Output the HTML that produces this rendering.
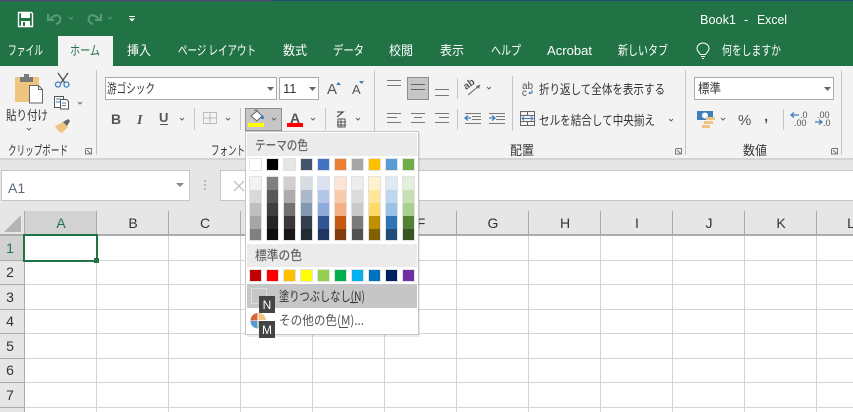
<!DOCTYPE html>
<html lang="ja"><head><meta charset="utf-8"><title>Excel</title>
<style>
html,body{margin:0;padding:0;width:853px;height:412px;overflow:hidden;background:#fff}
svg{display:block}
text{font-family:"Liberation Sans","Noto Sans CJK JP",sans-serif;font-size:12px;fill:#444}
text.j{font-family:"Noto Sans CJK JP","Liberation Sans",sans-serif;font-size:13px}
text.w{fill:#fff}
text.h{fill:#333;text-anchor:middle;font-size:14px}
.c{fill:none;stroke:#666;stroke-width:1}
</style></head><body>
<svg width="853" height="412" viewBox="0 0 853 412" xmlns="http://www.w3.org/2000/svg">
<!-- title / tabs -->
<rect width="853" height="66" fill="#217346"/>
<rect width="273" height="1" fill="#5b3a86"/><rect x="273" width="580" height="1" fill="#1f4e79"/>
<rect x="58" y="36" width="55" height="30" fill="#f3f3f3"/>
<!-- QAT -->
<path d="M18.500 12.500h13l1 1v13h-14z" fill="none" stroke="#fff" stroke-width="1.400"/>
<rect x="21" y="13" width="9" height="5" fill="#fff"/><rect x="21" y="21" width="9" height="5" fill="#fff"/><rect x="23" y="22" width="2" height="4" fill="#217346"/>
<path d="M50 19c3-3 6-5 9-3 3 3 1 7-3 8M48 14v6h6" fill="none" stroke="#5a9a78" stroke-width="2"/>
<path d="M99 19c-3-3-6-5-9-3-3 3-1 7 3 8M101 14v6h-6" fill="none" stroke="#5a9a78" stroke-width="2"/>
<path d="M69 17l2 2 2-2M108 17l2 2 2-2" fill="none" stroke="#5a9a78"/>
<rect x="129" y="16" width="6" height="1" fill="#fff"/><path d="M129 18.500h6l-3 3z" fill="#fff"/>
<text class="w" x="700" y="24" textLength="36" lengthAdjust="spacingAndGlyphs" style="font-size:13px">Book1</text>
<text class="w" x="744" y="24" style="font-size:13px">-</text>
<text class="w" x="757" y="24" textLength="30" lengthAdjust="spacingAndGlyphs" style="font-size:13px">Excel</text>
<text class="w j" x="8" y="55" textLength="35" lengthAdjust="spacingAndGlyphs">ファイル</text>
<text class="j" x="70" y="55" textLength="30" lengthAdjust="spacingAndGlyphs" style="fill:#217346">ホーム</text>
<text class="w j" x="127" y="55" textLength="24" lengthAdjust="spacingAndGlyphs">挿入</text>
<text class="w j" x="178" y="55" textLength="78" lengthAdjust="spacingAndGlyphs">ページ レイアウト</text>
<text class="w j" x="283" y="55" textLength="24" lengthAdjust="spacingAndGlyphs">数式</text>
<text class="w j" x="333" y="55" textLength="31" lengthAdjust="spacingAndGlyphs">データ</text>
<text class="w j" x="389" y="55" textLength="24" lengthAdjust="spacingAndGlyphs">校閲</text>
<text class="w j" x="440" y="55" textLength="24" lengthAdjust="spacingAndGlyphs">表示</text>
<text class="w j" x="491" y="55" textLength="30" lengthAdjust="spacingAndGlyphs">ヘルプ</text>
<text class="w" x="547" y="55" textLength="45" lengthAdjust="spacingAndGlyphs" style="font-size:13px">Acrobat</text>
<text class="w j" x="618" y="55" textLength="50" lengthAdjust="spacingAndGlyphs">新しいタブ</text>
<text class="w j" x="722" y="55" textLength="59" lengthAdjust="spacingAndGlyphs">何をしますか</text>
<path d="M700.500 54.500c-2-3-3.500-3.500-3.500-6a6 5.500 0 0 1 12 0c0 2.500-1.500 3-3.500 6zM701 56.500h4M702 58.500h2" fill="none" stroke="#fff"/>
<!-- ribbon -->
<rect y="66" width="853" height="93" fill="#f3f3f3"/>
<rect y="159" width="853" height="52" fill="#e6e6e6"/>
<rect y="158" width="853" height="2" fill="#d4d4d4"/>
<g fill="#c6c6c6">
<rect x="96" y="70" width="1" height="85"/><rect x="374" y="70" width="1" height="85"/><rect x="685" y="70" width="1" height="85"/><rect x="841" y="70" width="1" height="85"/>
<rect x="194" y="108" width="1" height="22"/><rect x="240" y="108" width="1" height="22"/><rect x="325" y="108" width="1" height="22"/>
<rect x="457" y="78" width="1" height="21"/><rect x="457" y="109" width="1" height="21"/><rect x="512" y="76" width="1" height="55"/><rect x="783" y="109" width="1" height="21"/>
</g>
<!-- clipboard -->
<rect x="15" y="77" width="24" height="25" rx="1" fill="#edc57f"/>
<rect x="20" y="77" width="13" height="5" fill="#7a7a7a"/><rect x="24" y="74" width="5" height="3" fill="#7a7a7a"/>
<path d="M29.500 85.500h9l4 4v13.500h-13z" fill="#fff" stroke="#666"/><path d="M38.500 85.500v4h4" fill="none" stroke="#666"/>
<text class="j" x="6" y="120" textLength="42" lengthAdjust="spacingAndGlyphs" style="fill:#333">貼り付け</text>
<path d="M27 128l2 2 2-2" class="c"/>
<path d="M58 73l7 10M68 73l-7 10" stroke="#555" fill="none" stroke-width="1.400"/><circle cx="58" cy="84.500" r="2.500" fill="none" stroke="#3f7fbe" stroke-width="1.300"/><circle cx="66.500" cy="84.500" r="2.500" fill="none" stroke="#3f7fbe" stroke-width="1.300"/>
<path d="M54.500 96.500h9v11h-9z" fill="#fff" stroke="#555"/><path d="M60.500 99.500h6l2 2v7.500h-8z" fill="#fff" stroke="#555"/><path d="M56 99h5M56 102h4M62 103h4M62 105.500h4" stroke="#3f7fbe"/>
<path d="M78 102l2 2 2-2" class="c"/>
<path d="M55 126l8-4 5 5-6 6c-3-1-5-3-7-7z" fill="#edc57f"/><path d="M63 122l5-3 2 2-3 5z" fill="#666"/>
<text class="j" x="8" y="155" textLength="60" lengthAdjust="spacingAndGlyphs" style="fill:#333">クリップボード</text>
<path d="M85.500 148.500h6v6M87 150l4 4M85.500 149v5h5" fill="none" stroke="#777"/>
<!-- font -->
<rect x="105.500" y="77.500" width="171" height="22" fill="#fff" stroke="#ababab"/>
<text class="j" x="107" y="93" textLength="48" lengthAdjust="spacingAndGlyphs" style="fill:#333">游ゴシック</text>
<path d="M267 87h7l-3.500 4z" fill="#666"/>
<rect x="279.500" y="77.500" width="39" height="22" fill="#fff" stroke="#ababab"/>
<text x="283" y="93" style="font-size:13px;fill:#333">11</text>
<path d="M309 87h7l-3.500 4z" fill="#666"/>
<text x="327" y="94" style="font-size:15px;fill:#555">A</text><path d="M336 85l2.500-3 2.500 3z" fill="#3f7fbe"/>
<text x="352" y="94" style="font-size:13px;fill:#555">A</text><path d="M359 81h5l-2.500 3z" fill="#3f7fbe"/>
<text x="111" y="124" style="font-size:14px;font-weight:bold;fill:#555">B</text>
<text x="137" y="124" style="font-size:14px;font-weight:bold;font-style:italic;font-family:'Liberation Serif',serif;fill:#555">I</text>
<text x="159" y="122" style="font-size:13px;font-weight:bold;fill:#555">U</text><rect x="160" y="124" width="8" height="1" fill="#555"/>
<path d="M180 118l2 2 2-2M226 118l2 2 2-2M311 118l2 2 2-2M356 118l2 2 2-2" class="c"/>
<path d="M203.500 112.500h13v11h-13zM210 112.500v11M203.500 118h13" fill="none" stroke="#888" stroke-dasharray="1 1"/>
<rect x="245.500" y="108.500" width="36" height="22" fill="#c6c6c6" stroke="#8e8e8e"/>
<path d="M272 118l2 2 2-2" class="c"/>
<path d="M251 116l6-5 5 5-5 5z" fill="#fff" stroke="#666"/><path d="M255 111v-1h2v2" fill="none" stroke="#666"/><path d="M261 115c2 0 3 1 3 4h-3z" fill="#3f7fbe"/>
<rect x="248" y="123" width="16" height="4" fill="#ffff00"/>
<text x="290" y="123" style="font-size:14px;font-weight:bold;fill:#555">A</text><rect x="287" y="123" width="16" height="4" fill="#ff0000"/>
<path d="M337 112h6l-6 5" fill="none" stroke="#555" stroke-width="1.300"/><path d="M338 119h7v8h-7zM337 122h9M337 125h9M341 119v8" fill="none" stroke="#555"/>
<text class="j" x="211" y="155" textLength="34" lengthAdjust="spacingAndGlyphs" style="fill:#333">フォント</text>
<!-- alignment -->
<path d="M387 80.500h14M387 85.500h14M435 89.500h14M435 95.500h14M387 113.500h14M387 117.500h10M387 122.500h14M411 113.500h14M414 117.500h8M411 122.500h14M435 113.500h14M439 117.500h10M435 122.500h14" stroke="#777" fill="none"/>
<rect x="407.500" y="77.500" width="21" height="22" fill="#c6c6c6" stroke="#8e8e8e"/>
<path d="M411 84.500h14M411 89.500h14" stroke="#666"/>
<path d="M468 95l12-10" stroke="#666" fill="none"/><path d="M480 85l-4 1 3 3z" fill="#666"/><text x="466" y="90" transform="rotate(-35 466 90)" style="font-size:10px;font-weight:bold;fill:#555">ab</text>
<path d="M487 87l2 2 2-2M669 119l2 2 2-2" class="c"/>
<path d="M465 113.500h16M472 116.500h9M472 119.500h9M465 123.500h16" stroke="#777" fill="none"/><path d="M471 118h-6M468 115.500l-3 2.500 3 2.500" stroke="#3f7fbe" stroke-width="1.300" fill="none"/>
<path d="M489 113.500h16M496 116.500h9M496 119.500h9M489 123.500h16" stroke="#777" fill="none"/><path d="M489 118h6M492 115.500l3 2.500-3 2.500" stroke="#3f7fbe" stroke-width="1.300" fill="none"/>
<text x="522" y="89" style="font-size:10px;fill:#555">ab</text><text x="522" y="96" style="font-size:10px;fill:#555">c</text><path d="M532 90v3h-3M530.500 92l-1.500 1 1.500 1" fill="none" stroke="#3f7fbe"/>
<text class="j" x="539" y="94" textLength="126" lengthAdjust="spacingAndGlyphs" style="fill:#333">折り返して全体を表示する</text>
<path d="M520.500 111.500h14v14h-14zM520.500 115.500h14M520.500 121.500h14M527.500 111.500v4M527.500 121.500v4" fill="#f3f3f3" stroke="#666"/>
<path d="M522 118.500h11M524 116.500l-2 2 2 2M531 116.500l2 2-2 2" fill="none" stroke="#3f7fbe"/>
<text class="j" x="539" y="125" textLength="116" lengthAdjust="spacingAndGlyphs" style="fill:#333">セルを結合して中央揃え</text>
<text class="j" x="510" y="155" textLength="24" lengthAdjust="spacingAndGlyphs" style="fill:#333">配置</text>
<path d="M675.500 148.500h6v6M677 150l4 4M675.500 149v5h5" fill="none" stroke="#777"/>
<!-- number -->
<rect x="694.500" y="77.500" width="139" height="22" fill="#fff" stroke="#ababab"/>
<text class="j" x="698" y="93" textLength="23" lengthAdjust="spacingAndGlyphs" style="fill:#333">標準</text>
<path d="M824 87h7l-3.500 4z" fill="#666"/>
<rect x="697" y="111" width="16" height="9" fill="#3f7fbe"/><ellipse cx="705" cy="115.500" rx="3" ry="3" fill="#fff"/>
<rect x="706" y="117" width="9" height="3" fill="#edc57f"/><rect x="704" y="121" width="9" height="3" fill="#edc57f"/><rect x="702" y="125" width="8" height="3" fill="#edc57f"/>
<path d="M721 118l2 2 2-2" class="c"/>
<text x="738" y="125" style="font-size:15px;fill:#555">%</text>
<text x="764" y="121" style="font-size:15px;font-weight:bold;fill:#555">,</text>
<text x="800" y="118" style="font-size:9px;fill:#555">.0</text><text x="794" y="126" style="font-size:9px;fill:#555">.00</text><path d="M799 115h-8M794 112.500l-3 2.500 3 2.500" fill="none" stroke="#3f7fbe" stroke-width="1.300"/>
<text x="817" y="118" style="font-size:9px;fill:#555">.00</text><text x="823" y="126" style="font-size:9px;fill:#555">.0</text><path d="M815 122h7M819 119.500l3 2.500-3 2.500" fill="none" stroke="#3f7fbe" stroke-width="1.300"/>
<text class="j" x="743" y="155" textLength="24" lengthAdjust="spacingAndGlyphs" style="fill:#333">数値</text>
<path d="M831.500 148.500h6v6M833 150l4 4M831.500 149v5h5" fill="none" stroke="#777"/>
<!-- formula bar -->
<rect x="1.500" y="170.500" width="188" height="30" fill="#fff" stroke="#c6c6c6"/>
<text x="8" y="193" style="font-size:14px;fill:#5a6a7a">A1</text>
<path d="M176 183h8l-4 4z" fill="#8a8a8a"/>
<path d="M205 180v2M205 184v2M205 188v2" stroke="#a6a6a6" stroke-width="1.500"/>
<rect x="220.500" y="170.500" width="640" height="30" fill="#fff" stroke="#c6c6c6"/>
<path d="M234 181l10 10M244 181l-10 10" stroke="#c6c6c6" stroke-width="1.500"/>
<!-- grid headers -->
<rect y="211" width="853" height="24" fill="#e6e6e6"/>
<rect y="235" width="24" height="177" fill="#e6e6e6"/>
<rect x="24" y="211" width="73" height="24" fill="#d2d2d2"/>
<rect y="235" width="24" height="25" fill="#d2d2d2"/>
<path d="M4 232l17-17v17z" fill="#b4b4b4"/>
<rect y="234" width="853" height="2" fill="#ababab"/>
<rect x="24" y="211" width="1" height="201" fill="#ababab"/>
<g fill="#d4d4d4">
<rect x="96" y="236" width="1" height="176"/><rect x="168" y="236" width="1" height="176"/><rect x="240" y="236" width="1" height="176"/><rect x="312" y="236" width="1" height="176"/><rect x="384" y="236" width="1" height="176"/><rect x="456" y="236" width="1" height="176"/><rect x="528" y="236" width="1" height="176"/><rect x="600" y="236" width="1" height="176"/><rect x="672" y="236" width="1" height="176"/><rect x="744" y="236" width="1" height="176"/><rect x="816" y="236" width="1" height="176"/>
<rect x="25" y="260" width="828" height="1"/><rect x="25" y="284" width="828" height="1"/><rect x="25" y="309" width="828" height="1"/><rect x="25" y="333" width="828" height="1"/><rect x="25" y="358" width="828" height="1"/><rect x="25" y="382" width="828" height="1"/><rect x="25" y="407" width="828" height="1"/>
</g>
<g fill="#ababab">
<rect x="96" y="211" width="1" height="24"/><rect x="168" y="211" width="1" height="24"/><rect x="240" y="211" width="1" height="24"/><rect x="312" y="211" width="1" height="24"/><rect x="384" y="211" width="1" height="24"/><rect x="456" y="211" width="1" height="24"/><rect x="528" y="211" width="1" height="24"/><rect x="600" y="211" width="1" height="24"/><rect x="672" y="211" width="1" height="24"/><rect x="744" y="211" width="1" height="24"/><rect x="816" y="211" width="1" height="24"/>
<rect y="260" width="24" height="1"/><rect y="284" width="24" height="1"/><rect y="309" width="24" height="1"/><rect y="333" width="24" height="1"/><rect y="358" width="24" height="1"/><rect y="382" width="24" height="1"/><rect y="407" width="24" height="1"/>
</g>
<text class="h" x="61" y="228" style="fill:#217346">A</text><text class="h" x="133" y="228">B</text><text class="h" x="205" y="228">C</text><text class="h" x="421" y="228">F</text><text class="h" x="493" y="228">G</text><text class="h" x="565" y="228">H</text><text class="h" x="637" y="228">I</text><text class="h" x="709" y="228">J</text><text class="h" x="781" y="228">K</text><text class="h" x="851" y="228">L</text>
<text class="h" x="10" y="253" style="fill:#217346">1</text><text class="h" x="10" y="277">2</text><text class="h" x="10" y="302">3</text><text class="h" x="10" y="326">4</text><text class="h" x="10" y="351">5</text><text class="h" x="10" y="375">6</text><text class="h" x="10" y="400">7</text>
<rect x="24" y="235" width="73" height="26" fill="none" stroke="#217346" stroke-width="2"/>
<rect x="94" y="258" width="5" height="5" fill="#217346"/>
<!-- dropdown -->
<rect x="247" y="133" width="173" height="204" fill="#000" opacity=".08"/>
<rect x="245.500" y="131.500" width="173" height="203" fill="#fff" stroke="#c6c6c6"/>
<rect x="247" y="133" width="170" height="23" fill="#ebebeb"/>
<text class="j" x="255" y="150" textLength="53" lengthAdjust="spacingAndGlyphs" style="font-weight:500;fill:#666">テーマの色</text>
<g stroke="#e2e2e2" stroke-width="1">
<rect x="249.500" y="158.500" width="12" height="12" fill="#fff"/><rect x="266.500" y="158.500" width="12" height="12" fill="#000"/><rect x="283.500" y="158.500" width="12" height="12" fill="#e7e6e6"/><rect x="300.500" y="158.500" width="12" height="12" fill="#44546a"/><rect x="317.500" y="158.500" width="12" height="12" fill="#4472c4"/><rect x="334.500" y="158.500" width="12" height="12" fill="#ed7d31"/><rect x="351.500" y="158.500" width="12" height="12" fill="#a5a5a5"/><rect x="368.500" y="158.500" width="12" height="12" fill="#ffc000"/><rect x="385.500" y="158.500" width="12" height="12" fill="#5b9bd5"/><rect x="402.500" y="158.500" width="12" height="12" fill="#70ad47"/>
</g>
<g>
<rect x="249" y="176" width="13" height="65" fill="#e2e2e2"/><rect x="266" y="176" width="13" height="65" fill="#e2e2e2"/><rect x="283" y="176" width="13" height="65" fill="#e2e2e2"/><rect x="300" y="176" width="13" height="65" fill="#e2e2e2"/><rect x="317" y="176" width="13" height="65" fill="#e2e2e2"/><rect x="334" y="176" width="13" height="65" fill="#e2e2e2"/><rect x="351" y="176" width="13" height="65" fill="#e2e2e2"/><rect x="368" y="176" width="13" height="65" fill="#e2e2e2"/><rect x="385" y="176" width="13" height="65" fill="#e2e2e2"/><rect x="402" y="176" width="13" height="65" fill="#e2e2e2"/>
<rect x="250" y="177" width="11" height="13" fill="#f2f2f2"/><rect x="250" y="190" width="11" height="13" fill="#d9d9d9"/><rect x="250" y="203" width="11" height="13" fill="#bfbfbf"/><rect x="250" y="216" width="11" height="13" fill="#a6a6a6"/><rect x="250" y="229" width="11" height="11" fill="#808080"/>
<rect x="267" y="177" width="11" height="13" fill="#808080"/><rect x="267" y="190" width="11" height="13" fill="#595959"/><rect x="267" y="203" width="11" height="13" fill="#404040"/><rect x="267" y="216" width="11" height="13" fill="#262626"/><rect x="267" y="229" width="11" height="11" fill="#0d0d0d"/>
<rect x="284" y="177" width="11" height="13" fill="#d0cece"/><rect x="284" y="190" width="11" height="13" fill="#afabab"/><rect x="284" y="203" width="11" height="13" fill="#767171"/><rect x="284" y="216" width="11" height="13" fill="#3b3838"/><rect x="284" y="229" width="11" height="11" fill="#181717"/>
<rect x="301" y="177" width="11" height="13" fill="#d6dce4"/><rect x="301" y="190" width="11" height="13" fill="#adb9ca"/><rect x="301" y="203" width="11" height="13" fill="#8497b0"/><rect x="301" y="216" width="11" height="13" fill="#333f4f"/><rect x="301" y="229" width="11" height="11" fill="#222b35"/>
<rect x="318" y="177" width="11" height="13" fill="#d9e1f2"/><rect x="318" y="190" width="11" height="13" fill="#b4c6e7"/><rect x="318" y="203" width="11" height="13" fill="#8ea9db"/><rect x="318" y="216" width="11" height="13" fill="#305496"/><rect x="318" y="229" width="11" height="11" fill="#203764"/>
<rect x="335" y="177" width="11" height="13" fill="#fce4d6"/><rect x="335" y="190" width="11" height="13" fill="#f8cbad"/><rect x="335" y="203" width="11" height="13" fill="#f4b084"/><rect x="335" y="216" width="11" height="13" fill="#c65911"/><rect x="335" y="229" width="11" height="11" fill="#833c0c"/>
<rect x="352" y="177" width="11" height="13" fill="#ededed"/><rect x="352" y="190" width="11" height="13" fill="#dbdbdb"/><rect x="352" y="203" width="11" height="13" fill="#c9c9c9"/><rect x="352" y="216" width="11" height="13" fill="#7b7b7b"/><rect x="352" y="229" width="11" height="11" fill="#525252"/>
<rect x="369" y="177" width="11" height="13" fill="#fff2cc"/><rect x="369" y="190" width="11" height="13" fill="#ffe699"/><rect x="369" y="203" width="11" height="13" fill="#ffd966"/><rect x="369" y="216" width="11" height="13" fill="#bf8f00"/><rect x="369" y="229" width="11" height="11" fill="#806000"/>
<rect x="386" y="177" width="11" height="13" fill="#ddebf7"/><rect x="386" y="190" width="11" height="13" fill="#bdd7ee"/><rect x="386" y="203" width="11" height="13" fill="#9bc2e6"/><rect x="386" y="216" width="11" height="13" fill="#2f75b5"/><rect x="386" y="229" width="11" height="11" fill="#1f4e78"/>
<rect x="403" y="177" width="11" height="13" fill="#e2efda"/><rect x="403" y="190" width="11" height="13" fill="#c6e0b4"/><rect x="403" y="203" width="11" height="13" fill="#a9d08e"/><rect x="403" y="216" width="11" height="13" fill="#548235"/><rect x="403" y="229" width="11" height="11" fill="#375623"/>
</g>
<rect x="247" y="244" width="170" height="23" fill="#ebebeb"/>
<text class="j" x="255" y="260" textLength="47" lengthAdjust="spacingAndGlyphs" style="font-weight:500;fill:#666">標準の色</text>
<g stroke="#e2e2e2">
<rect x="249.500" y="269.500" width="12" height="12" fill="#c00000"/><rect x="266.500" y="269.500" width="12" height="12" fill="#ff0000"/><rect x="283.500" y="269.500" width="12" height="12" fill="#ffc000"/><rect x="300.500" y="269.500" width="12" height="12" fill="#ffff00"/><rect x="317.500" y="269.500" width="12" height="12" fill="#92d050"/><rect x="334.500" y="269.500" width="12" height="12" fill="#00b050"/><rect x="351.500" y="269.500" width="12" height="12" fill="#00b0f0"/><rect x="368.500" y="269.500" width="12" height="12" fill="#0070c0"/><rect x="385.500" y="269.500" width="12" height="12" fill="#002060"/><rect x="402.500" y="269.500" width="12" height="12" fill="#7030a0"/>
</g>
<rect x="247" y="284" width="170" height="24" fill="#c6c6c6"/>
<rect x="251.500" y="288.500" width="15" height="15" fill="none" stroke="#ddd"/>
<text class="j" x="279" y="301" textLength="86" lengthAdjust="spacingAndGlyphs" style="fill:#333">塗りつぶしなし(N)</text><rect x="350" y="302" width="8" height="1" fill="#333"/>
<path d="M257.500 320.500v-7.500a7.500 7.500 0 0 0-7 7.500z" fill="#d9633a"/><path d="M258.500 320v-7a7.500 7.500 0 0 1 7.500 7z" fill="#edc57f"/><path d="M258.500 321h7.500a7.500 7.500 0 0 1-7.500 7.500z" fill="#70ad47"/><path d="M257.500 321v7.500a7.500 7.500 0 0 1-7-7.500z" fill="#5b9bd5"/>
<text class="j" x="279" y="325" textLength="85" lengthAdjust="spacingAndGlyphs" style="fill:#555">その他の色(M)...</text><rect x="339" y="327" width="9" height="1" fill="#555"/>
<rect x="259" y="296" width="16" height="17" fill="#444"/><text class="w" x="267" y="309" text-anchor="middle">N</text>
<rect x="259" y="321" width="16" height="17" fill="#444"/><text class="w" x="267" y="334" text-anchor="middle">M</text>
</svg>
</body></html>
